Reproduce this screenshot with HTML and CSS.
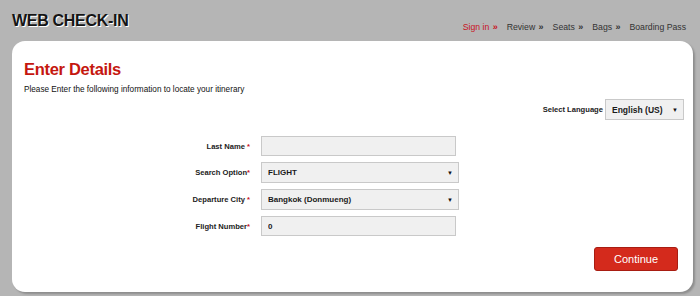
FILE: index.html
```html
<html>
<head>
	<title>Web Check-In</title>
	<link rel="stylesheet" href="styles.css">
</head>
<body>
	<div id="header">
		<div id="title">WEB CHECK-IN</div>
		<div id="steps">
			<span class="step current">Sign in <b>&raquo;</b></span>
			<span class="step">Review <b>&raquo;</b></span>
			<span class="step">Seats <b>&raquo;</b></span>
			<span class="step">Bags <b>&raquo;</b></span>
			<span class="step">Boarding Pass</span>
		</div>
	</div>
	<div id="card">
		<div id="heading">Enter Details</div>
		<div id="intro">Please Enter the following information to locate your itinerary</div>
		<div id="language_row">
			<span id="language_label">Select Language</span>
			<span class="select_wrap lang">
				<select id="language"><option>English (US)</option></select>
			</span>
		</div>
		<div id="form">
			<label>Last Name <i>*</i></label>
			<input type="text" class="field" value="" />
			<label>Search Option<i>*</i></label>
			<span class="select_wrap wide">
				<select class="field"><option>FLIGHT</option></select>
			</span>
			<label>Departure City <i>*</i></label>
			<span class="select_wrap wide">
				<select class="field"><option>Bangkok (Donmueng)</option></select>
			</span>
			<label>Flight Number<i>*</i></label>
			<input type="text" class="field" value="0" />
		</div>
		<div id="actions">
			<input id="continue_button" type="button" value="Continue" />
		</div>
	</div>
</body>
</html>
```

FILE: styles.css
```css
body {
	margin: 0;
	background-color: #b5b5b5;
	font-family: "Liberation Sans", Arial, sans-serif;
	color: #222;
}

#header {
	display: flex;
	align-items: flex-end;
	justify-content: space-between;
	height: 41px;
	padding: 0 14px 0 12px;
	box-sizing: border-box;
}
#title {
	font-size: 16px;
	font-weight: bold;
	letter-spacing: -0.3px;
	color: #151515;
	text-shadow: 1px 1px 0 #fff;
	margin-bottom: 11px;
}
#steps {
	display: flex;
	gap: 9px;
	font-size: 8.7px;
	color: #333;
	margin-bottom: 9px;
}
.step b {
	font-size: 9px;
	margin-left: 1px;
}
.step.current {
	color: #c8141e;
}

#card {
	background-color: #fff;
	margin: 0 7px 0 12px;
	height: 251px;
	border-radius: 13px;
	box-shadow: 2px 2px 2px #8e8e8e;
	padding: 19px 9px 0 12px;
	box-sizing: border-box;
}
#heading {
	font-size: 16.5px;
	font-weight: bold;
	letter-spacing: -0.3px;
	color: #c5170f;
	line-height: 18px;
}
#intro {
	font-size: 8.2px;
	margin-top: 7px;
	color: #111;
}

#language_row {
	display: flex;
	justify-content: flex-end;
	align-items: center;
	gap: 2px;
	margin-top: 5px;
}
#language_label {
	font-size: 7.6px;
	font-weight: bold;
	color: #222;
}

.select_wrap {
	position: relative;
	display: inline-block;
}
.select_wrap::after {
	content: "\25BC";
	position: absolute;
	right: 6px;
	top: 50%;
	transform: translateY(-50%);
	font-size: 6px;
	color: #111;
	pointer-events: none;
}
select, .field {
	appearance: none;
	-webkit-appearance: none;
	background-color: #f0f0f0;
	border: 1px solid #c9c9c9;
	border-radius: 0;
	font-family: "Liberation Sans", Arial, sans-serif;
	font-weight: bold;
	font-size: 8px;
	color: #1a1a1a;
	box-sizing: border-box;
	padding: 0 6px;
	margin: 0;
	outline: none;
}
#language {
	width: 79px;
	height: 21px;
	font-size: 8.5px;
}

#form {
	display: grid;
	grid-template-columns: 226px auto;
	column-gap: 11px;
	row-gap: 6px;
	align-items: center;
	justify-content: start;
	margin-top: 16px;
}
#form label {
	text-align: right;
	font-size: 7.6px;
	font-weight: bold;
	color: #222;
}
#form label i {
	font-style: normal;
	color: #c8141e;
}
input.field {
	width: 195px;
	height: 20px;
}
.select_wrap.wide select {
	width: 198px;
	height: 21px;
	display: block;
}

#actions {
	display: flex;
	justify-content: flex-end;
	padding-right: 6px;
	margin-top: 11px;
}
#continue_button {
	width: 84px;
	height: 24px;
	background-color: #d42a1c;
	border: 1px solid #a81d12;
	border-radius: 3px;
	color: #fff;
	font-family: "Liberation Sans", Arial, sans-serif;
	font-size: 11px;
}
```
